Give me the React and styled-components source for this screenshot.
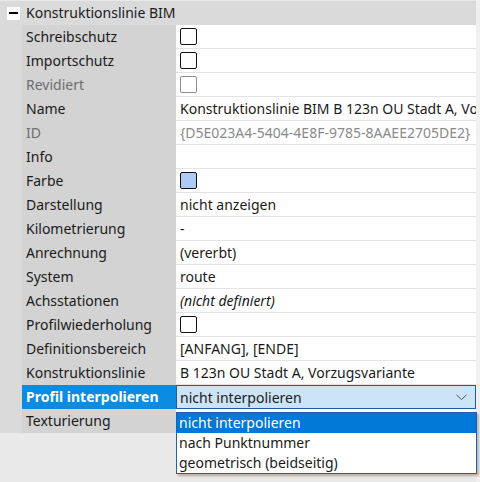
import React from "react";
import styled, { createGlobalStyle } from "styled-components";

const Global = createGlobalStyle`
  html, body { margin: 0; padding: 0; }
  body { font-family: "Noto Sans", "Open Sans", sans-serif; }
`;

const rows = [
  { label: "Schreibschutz", check: true },
  { label: "Importschutz", check: true },
  { label: "Revidiert", check: true, disabled: true },
  { label: "Name", value: "Konstruktionslinie BIM B 123n OU Stadt A, Vorzugsvariante" },
  { label: "ID", value: "{D5E023A4-5404-4E8F-9785-8AAEE2705DE2}", disabled: true },
  { label: "Info", value: "" },
  { label: "Farbe", color: "#aecbf5" },
  { label: "Darstellung", value: "nicht anzeigen" },
  { label: "Kilometrierung", value: "-" },
  { label: "Anrechnung", value: "(vererbt)" },
  { label: "System", value: "route" },
  { label: "Achsstationen", value: "(nicht definiert)", italic: true },
  { label: "Profilwiederholung", check: true },
  { label: "Definitionsbereich", value: "[ANFANG], [ENDE]" },
  { label: "Konstruktionslinie", value: "B 123n OU Stadt A, Vorzugsvariante" },
  { label: "Profil interpolieren", value: "nicht interpolieren", active: true },
  { label: "Texturierung", value: "" },
];

const options = ["nicht interpolieren", "nach Punktnummer", "geometrisch (beidseitig)"];

function App() {
  return (
    <>
      <Global />
      <Page>
        <Panel>
          <Header>
            <Toggle />
            <HeaderText>Konstruktionslinie BIM</HeaderText>
          </Header>
          <Body>
            <Indent />
            <Grid>
              {rows.map((r) => (
                <React.Fragment key={r.label}>
                  <Label active={r.active} disabled={r.disabled}>
                    {r.label}
                  </Label>
                  {r.active ? (
                    <Combo>
                      <span>{r.value}</span>
                      <svg width="11" height="7" viewBox="0 0 11 7">
                        <path d="M0.5 0.8 L5.5 5.6 L10.5 0.8" fill="none" stroke="#505050" strokeWidth="1" />
                      </svg>
                      <List>
                        {options.map((o, i) => (
                          <Option key={o} selected={i === 0}>
                            {o}
                          </Option>
                        ))}
                      </List>
                    </Combo>
                  ) : (
                    <Value disabled={r.disabled} italic={r.italic}>
                      {r.check && <Check disabled={r.disabled} />}
                      {r.color && <Check fill={r.color} />}
                      {r.value}
                    </Value>
                  )}
                </React.Fragment>
              ))}
            </Grid>
          </Body>
        </Panel>
        <Strip />
      </Page>
    </>
  );
}

const Page = styled.div`
  width: 480px;
  height: 482px;
  display: flex;
  background: #e9e9e9;
  overflow: hidden;
  font-size: 14px;
  color: #1a1a1a;
`;

const Panel = styled.div`
  width: 476px;
  display: flex;
  flex-direction: column;
`;

const Strip = styled.div`
  width: 4px;
  background: #f0f0f0;
`;

const Header = styled.div`
  height: 24px;
  border-top: 1px solid #e8e8e8;
  background: #dadada;
  display: flex;
  align-items: center;
  padding-left: 7px;
`;

const Toggle = styled.div`
  width: 13px;
  height: 13px;
  background: #fff;
  position: relative;
  margin-right: 6px;
  &::after {
    content: "";
    position: absolute;
    left: 2px;
    right: 2px;
    top: 5px;
    height: 2px;
    background: #000;
  }
`;

const HeaderText = styled.span`
  line-height: 24px;
`;

const Body = styled.div`
  display: flex;
`;

const Indent = styled.div`
  width: 22px;
  background: #dadada;
`;

const Grid = styled.div`
  flex: 1;
  display: grid;
  grid-template-columns: 154px 300px;
  grid-auto-rows: 24px;
`;

const Label = styled.div`
  background: ${(p) => (p.active ? "#0a8ce2" : "#d3d3d3")};
  color: ${(p) => (p.active ? "#fff" : p.disabled ? "#6d6d6d" : "#1a1a1a")};
  font-weight: ${(p) => (p.active ? 700 : 400)};
  padding-left: 4px;
  line-height: 24px;
  white-space: nowrap;
  overflow: hidden;
`;

const Value = styled.div`
  background: #fff;
  border-bottom: 1px solid #e3e3e3;
  padding-left: 4px;
  display: flex;
  align-items: center;
  white-space: nowrap;
  overflow: hidden;
  color: ${(p) => (p.disabled ? "#8a8a8a" : "#1a1a1a")};
  font-style: ${(p) => (p.italic ? "italic" : "normal")};
`;

const Check = styled.div`
  width: 15px;
  height: 15px;
  border: 1px solid ${(p) => (p.disabled ? "#8e8e8e" : "#111")};
  border-radius: 2px;
  background: ${(p) => p.fill || "#fff"};
`;

const Combo = styled.div`
  position: relative;
  background: #cce4f7;
  border: 1px solid #1f5fa0;
  padding: 0 8px 0 3px;
  display: flex;
  align-items: center;
  justify-content: space-between;
  white-space: nowrap;
`;

const List = styled.div`
  position: absolute;
  left: -1px;
  top: 26px;
  width: 299px;
  background: #fff;
  border: 1px solid #1f62a8;
  box-shadow: 2px 2px 2px rgba(0, 0, 0, 0.25);
  z-index: 5;
`;

const Option = styled.div`
  height: 20px;
  line-height: 20px;
  padding-left: 2px;
  background: ${(p) => (p.selected ? "#0078d7" : "#fff")};
  color: ${(p) => (p.selected ? "#fff" : "#1a1a1a")};
`;

export default App;
